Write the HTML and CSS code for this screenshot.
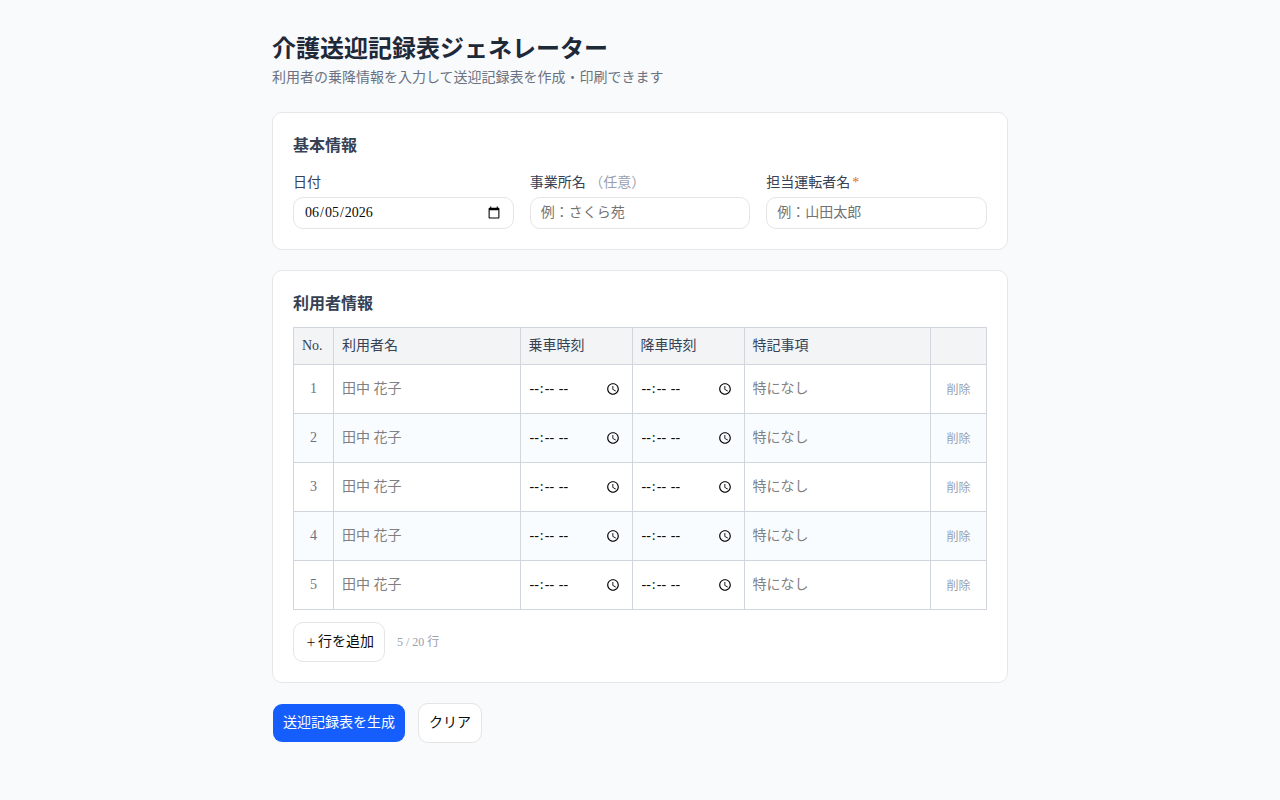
FILE: index.html
```html
<!DOCTYPE html>
<html lang="ja">
<head>
    <meta charset="UTF-8">
    <meta name="viewport" content="width=device-width, initial-scale=1.0">
    <title>介護送迎記録表ジェネレーター</title>
    <link rel="stylesheet" href="styles.css">
</head>
<body>
    <main class="container">
        <header class="page-header">
            <h1>介護送迎記録表ジェネレーター</h1>
            <p>利用者の乗降情報を入力して送迎記録表を作成・印刷できます</p>
        </header>

        <section class="card">
            <h2>基本情報</h2>
            <div class="fields">
                <div class="field">
                    <label for="date">日付</label>
                    <input class="input" type="date" id="date" value="2026-06-05">
                </div>
                <div class="field">
                    <label for="office">事業所名 <span class="optional">（任意）</span></label>
                    <input class="input" type="text" id="office" placeholder="例：さくら苑">
                </div>
                <div class="field">
                    <label for="driver">担当運転者名<span class="required">*</span></label>
                    <input class="input" type="text" id="driver" placeholder="例：山田太郎">
                </div>
            </div>
        </section>

        <section class="card card--users">
            <h2>利用者情報</h2>
            <table class="table">
                <thead>
                    <tr>
                        <th class="col-no">No.</th>
                        <th class="col-name">利用者名</th>
                        <th class="col-time">乗車時刻</th>
                        <th class="col-time">降車時刻</th>
                        <th class="col-note">特記事項</th>
                        <th class="col-delete"></th>
                    </tr>
                </thead>
                <tbody>
                    <tr>
                        <td class="no">1</td>
                        <td><input class="cell-input" type="text" placeholder="田中 花子" aria-label="利用者名"></td>
                        <td><input class="cell-input" type="time" aria-label="乗車時刻"></td>
                        <td><input class="cell-input" type="time" aria-label="降車時刻"></td>
                        <td><input class="cell-input" type="text" placeholder="特になし" aria-label="特記事項"></td>
                        <td class="delete"><button class="delete-button" type="button">削除</button></td>
                    </tr>
                    <tr>
                        <td class="no">2</td>
                        <td><input class="cell-input" type="text" placeholder="田中 花子" aria-label="利用者名"></td>
                        <td><input class="cell-input" type="time" aria-label="乗車時刻"></td>
                        <td><input class="cell-input" type="time" aria-label="降車時刻"></td>
                        <td><input class="cell-input" type="text" placeholder="特になし" aria-label="特記事項"></td>
                        <td class="delete"><button class="delete-button" type="button">削除</button></td>
                    </tr>
                    <tr>
                        <td class="no">3</td>
                        <td><input class="cell-input" type="text" placeholder="田中 花子" aria-label="利用者名"></td>
                        <td><input class="cell-input" type="time" aria-label="乗車時刻"></td>
                        <td><input class="cell-input" type="time" aria-label="降車時刻"></td>
                        <td><input class="cell-input" type="text" placeholder="特になし" aria-label="特記事項"></td>
                        <td class="delete"><button class="delete-button" type="button">削除</button></td>
                    </tr>
                    <tr>
                        <td class="no">4</td>
                        <td><input class="cell-input" type="text" placeholder="田中 花子" aria-label="利用者名"></td>
                        <td><input class="cell-input" type="time" aria-label="乗車時刻"></td>
                        <td><input class="cell-input" type="time" aria-label="降車時刻"></td>
                        <td><input class="cell-input" type="text" placeholder="特になし" aria-label="特記事項"></td>
                        <td class="delete"><button class="delete-button" type="button">削除</button></td>
                    </tr>
                    <tr>
                        <td class="no">5</td>
                        <td><input class="cell-input" type="text" placeholder="田中 花子" aria-label="利用者名"></td>
                        <td><input class="cell-input" type="time" aria-label="乗車時刻"></td>
                        <td><input class="cell-input" type="time" aria-label="降車時刻"></td>
                        <td><input class="cell-input" type="text" placeholder="特になし" aria-label="特記事項"></td>
                        <td class="delete"><button class="delete-button" type="button">削除</button></td>
                    </tr>
                </tbody>
            </table>
            <div class="table-footer">
                <button class="button" type="button"><span class="plus">＋</span>行を追加</button>
                <span class="row-count">5 / 20 行</span>
            </div>
        </section>

        <div class="actions">
            <button class="button button--primary" type="button">送迎記録表を生成</button>
            <button class="button" type="button">クリア</button>
        </div>
    </main>
</body>
</html>
```
FILE: styles.css
```css
/* Reset */
* {
    margin: 0;
    padding: 0;
    box-sizing: border-box;
}
body {
    font-family: "Liberation Serif", "Noto Sans CJK JP", serif;
    min-height: 100vh;
    background-color: #f9fafb;
    color: #0a0a0a;
    line-height: 1.5;
}
input,
button {
    font: inherit;
    color: inherit;
}
.container {
    max-width: 768px;
    margin: 0 auto;
    padding: 32px 16px;
}
.page-header {
    margin-bottom: 24px;
}
.page-header h1 {
    padding-top: 1px;
    font-size: 24px;
    line-height: 32px;
    color: #1e2939;
}
.page-header p {
    margin-top: 3px;
    font-size: 14px;
    line-height: 20px;
    color: #6a7282;
}

/* Cards */
.card {
    margin-bottom: 20px;
    padding: 20px;
    background-color: #fff;
    border: 1px solid #e5e7eb;
    border-radius: 10px;
}
.card h2 {
    padding-top: 1px;
    margin-bottom: 15px;
    font-size: 16px;
    line-height: 24px;
    color: #364153;
}
.card--users h2 {
    margin-bottom: 11px;
}

/* Form fields */
.fields {
    display: grid;
    grid-template-columns: repeat(3, 1fr);
    gap: 16px;
}
.field label {
    display: block;
    height: 20px;
    margin-bottom: 4px;
    font-size: 14px;
    line-height: 20px;
    color: #364153;
}
.optional {
    color: #99a1af;
}
.required {
    margin-left: 2px;
    color: #e17100;
}
.input {
    display: block;
    width: 100%;
    height: 32px;
    padding: 4px 10px;
    font-size: 14px;
    line-height: 20px;
    background-color: transparent;
    border: 1px solid #e5e5e5;
    border-radius: 10px;
}
.input::placeholder {
    color: #737373;
}

/* Users table */
.table {
    width: 100%;
    table-layout: fixed;
    border-collapse: collapse;
    font-size: 14px;
    line-height: 20px;
}
.table th,
.table td {
    border: 1px solid #d1d5dc;
}
.table th {
    height: 37px;
    padding: 0 8px;
    font-weight: 400;
    text-align: left;
    color: #364153;
    background-color: #f3f4f6;
}
.table td {
    height: 49px;
}
.table tbody tr:nth-child(even) {
    background-color: #f8fcff;
}
.col-no {
    width: 40px;
}
.col-time {
    width: 112px;
}
.col-delete {
    width: 56px;
}
.no,
.delete {
    text-align: center;
    color: #6a7282;
}
.cell-input {
    display: block;
    width: 100%;
    height: 40px;
    padding: 0 8px;
    border: none;
    background: transparent;
}
.cell-input::placeholder {
    color: #808080;
}
.delete-button {
    display: block;
    margin: 0 auto;
    padding-top: 1px;
    font-size: 12px;
    line-height: 16px;
    color: #99a1af;
    border: none;
    background: none;
    cursor: pointer;
}
.table-footer,
.actions {
    display: flex;
    align-items: center;
    gap: 12px;
}
.table-footer {
    margin-top: 12px;
}
.row-count {
    font-size: 12px;
    line-height: 16px;
    color: #99a1af;
}

/* Buttons */
.button {
    height: 40px;
    padding: 0 10px;
    font-size: 14px;
    line-height: 20px;
    white-space: nowrap;
    background-color: #fff;
    background-clip: padding-box;
    border: 1px solid #e5e5e5;
    border-radius: 10px;
    cursor: pointer;
}
.button--primary {
    color: #fff;
    background-color: #155dfc;
    border-color: transparent;
}
.plus {
    display: inline-block;
    width: 14px;
    font-size: 10px;
    text-align: center;
}
```
